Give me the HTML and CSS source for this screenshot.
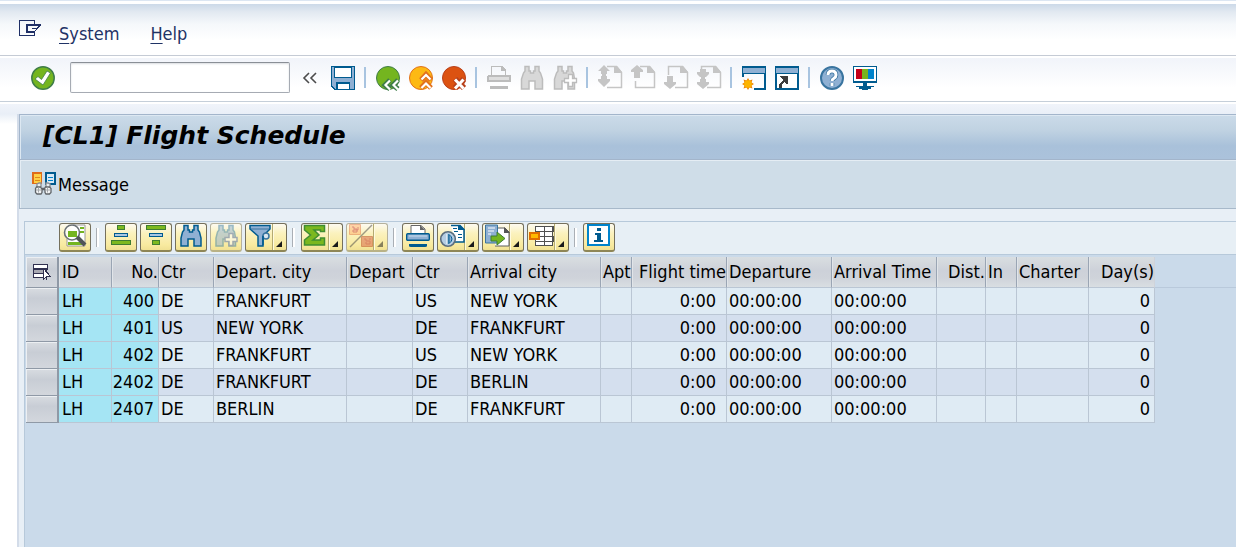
FILE: index.html
```html
<!DOCTYPE html>
<html lang="en">
<head>
<meta charset="utf-8">
<title>[CL1] Flight Schedule</title>
<link rel="stylesheet" href="styles.css">
</head>
<body>
<nav class="menubar" aria-label="Menu">
  <button class="icon-btn menu-icon" aria-label="Window menu"><svg width="24" height="18" viewBox="0 0 24 18" fill="none" stroke="#1f2f66" shape-rendering="crispEdges"><path d="M16.500 4V.5H1.500v15h15V12"/><path d="M8 5h15M9 4v8h7" stroke-width="2"/><path d="M22.500 5l-3 3h-6M20 8l-4 4" /></svg></button>
  <button class="menu-item"><u>S</u><span>ystem</span></button>
  <button class="menu-item"><u>H</u><span>elp</span></button>
</nav>

<div class="command-bar" role="toolbar" aria-label="System toolbar">
  <button class="icon-btn enter" aria-label="Enter"><svg width="24" height="24" viewBox="0 0 24 24"><circle cx="12" cy="12" r="11.200" fill="#74b51f" stroke="#3f7d49" stroke-width="1.500"/><path d="M4 13l3-2.500 3.500 3L16 5l3.500 2L12 19z" fill="#fff" stroke="#3f7d49" stroke-width=".8"/></svg></button>
  <input class="command" type="text" aria-label="Command">
  <button class="icon-btn collapse" aria-label="Hide command field"><svg width="16" height="12" viewBox="0 0 16 12" fill="none" stroke="#4c4c4c" stroke-width="1.600"><path d="M6 1L1 6l5 5M13 1L8 6l5 5"/></svg></button>
  <button class="icon-btn" aria-label="Save"><svg width="24" height="24" viewBox="0 0 24 24" shape-rendering="crispEdges"><path d="M0 0h24v24H3l-3-3z" fill="#005b8f"/><path d="M1 1h22v22H4l-3-3z" fill="#8fb0d3"/><path d="M3 1h18v11H3z" fill="#005b8f"/><path d="M4 2h16v9H4z" fill="#fff"/><path d="M5 16h14v8H5z" fill="#005b8f"/><path d="M7 18h11v5H7z" fill="#fff"/></svg></button>
  <span class="sep"></span>
  <button class="icon-btn" aria-label="Back"><svg width="24" height="24" viewBox="0 0 24 24" fill="none"><circle cx="12" cy="12" r="11.500" fill="#74b51f" stroke="#3f7d49"/><path d="M14 14l-5 5 5 4M22 14l-5 5 5 4" stroke="#3f7d49" stroke-width="5"/><path d="M14 14.500L9.500 19l4.500 4.500M22 14.500L17.500 19l4.500 4.500" stroke="#fff" stroke-width="2.200"/></svg></button>
  <button class="icon-btn" aria-label="Exit"><svg width="24" height="24" viewBox="0 0 24 24" fill="none"><circle cx="12" cy="12" r="11.500" fill="#fdb913" stroke="#e2711d"/><path d="M12 14l5-5.500 5 5.500M12 22l5-5.500 5 5.500" stroke="#e2711d" stroke-width="5"/><path d="M12.500 13.500L17 9l4.500 4.500M12.500 22l4.500-4.500 4.500 4.500" stroke="#fff" stroke-width="2.200"/></svg></button>
  <button class="icon-btn" aria-label="Cancel"><svg width="24" height="24" viewBox="0 0 24 24" fill="none"><circle cx="12" cy="12" r="11.500" fill="#dc5211" stroke="#b8401b"/><path d="M13 13l9 9M22 13l-9 9" stroke="#b8401b" stroke-width="6"/><path d="M13 13.500l8.500 9M21.500 13.500l-8.500 9" stroke="#fff" stroke-width="3"/></svg></button>
  <span class="sep"></span>
  <button class="icon-btn" aria-label="Print" disabled><svg width="24" height="24" viewBox="0 0 24 24" shape-rendering="crispEdges"><path d="M4 9V0h11l4 4v5h-1V5h-4V1H5v8zM0 11q0-2 2-2h20q2 0 2 2v5H0z" fill="#bcbcbc"/><path d="M2 11h20v3H2z" fill="#dedede"/><path d="M3 20h18v2q0 1-2 1H5q-2 0-2-1z" fill="#bcbcbc"/></svg></button>
  <button class="icon-btn" aria-label="Find" disabled><svg width="24" height="24" viewBox="0 0 24 24"><path d="M5 .5h4V5h1.500v2h3V5H15V.500h4V5l1.500 2 2 6v10H15v-8H9v8H1.500V13l2-6L5 5z" fill="#d8d8d8" stroke="#bcbcbc" stroke-width="1.500"/></svg></button>
  <button class="icon-btn" aria-label="Find next" disabled><svg width="24" height="24" viewBox="0 0 24 24"><path d="M5 .5h4V5h1.500v2h3V5H15V.500h4V5l1.500 2 1 6v10H15v-8H9v8H1.500V13l2-6L5 5z" fill="#d8d8d8" stroke="#bcbcbc" stroke-width="1.500"/><path d="M15.500 8.500h4v4h4v4h-4v4h-4v-4h-4v-4h4z" fill="#fff" stroke="#bcbcbc" stroke-width="1.300"/></svg></button>
  <span class="sep"></span>
  <button class="icon-btn" aria-label="First page" disabled><svg width="24" height="24" viewBox="0 0 24 24"><path d="M9 .5h9.500l5 6v15H9" fill="none" stroke="#c5c5c5" stroke-width="1.500"/><path d="M16 0h3l5 6v1h-8zM6-1l6 6H9v3H3V5H0zM3 10h6v3h3v2l-6 6-6-6v-2h3zM4 8h4v2H4z" fill="#c5c5c5"/></svg></button>
  <button class="icon-btn" aria-label="Previous page" disabled><svg width="24" height="24" viewBox="0 0 24 24"><path d="M9 .5h9.500l5 6v15H4.500V15" fill="none" stroke="#c5c5c5" stroke-width="1.500"/><path d="M16 0h3l5 6v1h-8zM6-1l6 5v2H9v6H3V6H0V4z" fill="#c5c5c5"/></svg></button>
  <button class="icon-btn" aria-label="Next page" disabled><svg width="24" height="24" viewBox="0 0 24 24"><path d="M4.500 9V.5h14l5 6v15H11" fill="none" stroke="#c5c5c5" stroke-width="1.500"/><path d="M16 0h3l5 6v1h-8zM3 10h6v6h3v2l-6 5-6-5v-2h3z" fill="#c5c5c5"/></svg></button>
  <button class="icon-btn" aria-label="Last page" disabled><svg width="24" height="24" viewBox="0 0 24 24"><path d="M4.500 3V.5h14l5 6v15H10" fill="none" stroke="#c5c5c5" stroke-width="1.500"/><path d="M16 0h3l5 6v1h-8zM3 3h6v3h3v2l-3 3H3L0 8V6h3zM4 11h4v2H4zM3 13h6v3h3v2l-6 5-6-5v-2h3z" fill="#c5c5c5"/></svg></button>
  <span class="sep"></span>
  <button class="icon-btn" aria-label="New session"><svg width="24" height="24" viewBox="0 0 24 24"><path d="M0 0h24v24H12v-2h10V8H2v3H0z" fill="#005b8f"/><path d="M1 2h22v5H1z" fill="#8fb0d3"/><path d="M6 12l1.500 2.500 3-1-1 3L12 18l-2.500 1.500 1 3-3-1L6 24l-1.500-2.500-3 1 1-3L0 18l2.500-1.500-1-3 3 1z" fill="#ef8500"/><circle cx="6" cy="18" r="3.800" fill="#fdb400"/></svg></button>
  <button class="icon-btn" aria-label="Create shortcut"><svg width="24" height="24" viewBox="0 0 24 24" shape-rendering="crispEdges"><path d="M0 0h24v24H0z" fill="#005b8f"/><path d="M1 2h22v5H1z" fill="#8fb0d3"/><path d="M2 8h20v14H2z" fill="#fff"/><path d="M5 10h8v8h-2l-2-2-2 3v3H4v-4l4-4z" fill="#3c3c3c"/></svg></button>
  <span class="sep"></span>
  <button class="icon-btn" aria-label="Help"><svg width="24" height="24" viewBox="0 0 24 24"><circle cx="12" cy="12" r="11" fill="#8fb0d3" stroke="#39749f" stroke-width="2"/><path d="M8 9q0-4 4-4t4 4q0 2-2 3.200T12 15M12 17v3" fill="none" stroke="#39749f" stroke-width="4.500"/><path d="M8 9q0-4 4-4t4 4q0 2-2 3.200T12 15M12 17v3" fill="none" stroke="#fff" stroke-width="3"/></svg></button>
  <button class="icon-btn" aria-label="Customize layout"><svg width="24" height="24" viewBox="0 0 24 24" shape-rendering="crispEdges"><path d="M0 0h24v17H14v3h7v1h-3v2h-3v1H9v-1H6v-2H3v-1h7v-3H0z" fill="#005b8f"/><path d="M1 1h22v14H1z" fill="#fff"/><path d="M3 3h6v10H3z" fill="#c4001a"/><path d="M9 3h6v10H9z" fill="#78b41e"/><path d="M15 3h6v10h-6z" fill="#0084cc"/></svg></button>
</div>

<main class="workspace">
  <div class="shell">
    <header class="title-bar"><h1>[CL1] Flight Schedule</h1></header>
    <div class="app-bar">
      <button class="message"><svg width="24" height="24" viewBox="0 0 24 24" shape-rendering="crispEdges"><path d="M0 0h10v12H0z" fill="#df6c1a"/><path d="M2 2h7v9H2z" fill="#ffd044"/><path d="M3 5h5v1H3zM3 8h5v1H3z" fill="#df8a1a"/><path d="M13 0h11v13H13z" fill="#005b8f"/><path d="M15 2h7v9h-7z" fill="#d8e9f5"/><path d="M16 5h5v1h-5zM16 8h5v1h-5z" fill="#0084cc"/><g shape-rendering="auto"><path d="M5 15v-3l2-1h2v4M18 15v-3l-2-1h-2v4" fill="#e9edf0" stroke="#8a8e92" stroke-width="1.300"/><path d="M3.500 16.500l1-1.500h4l1 1.500h3l1-1.500h4l1.500 1.500v4l-1.500 1.500h-3.500l-1-1.500v-3h-3v3l-1 1.500h-4l-1.500-1.500z" fill="#f2f4f5" stroke="#606468" stroke-width="1.300"/><path d="M6.500 15.500v5M4 18h5M15.500 15.500v5M13 18h5" stroke="#a4a8ac"/></g></svg><span>Message</span></button>
    </div>
    <section class="grid-panel">
      <div class="grid-tools" role="toolbar" aria-label="List toolbar">
        <button class="tool" aria-label="Details"><svg width="24" height="24" viewBox="0 0 24 24"><path d="M10 1h12v21H4v-7" fill="#fff" stroke="#999"/><path d="M17 3h4v2h-4zM17 7h4v2h-4zM5 18h14v3H5z" fill="#74b51f"/><circle cx="9" cy="8.500" r="7.500" fill="#fff" fill-opacity=".8" stroke="#6a7176" stroke-width="1.600"/><path d="M5 7h9v6H5z" fill="#74b51f"/><path d="M14 13l8 8" stroke="#505558" stroke-width="4"/></svg></button>
        <span class="tool-sep"></span>
        <button class="tool" aria-label="Sort ascending"><svg width="24" height="24" viewBox="0 0 24 24" shape-rendering="crispEdges" stroke-width="1"><path d="M8.500 1.500h7v4h-7zM2.500 16.500h19v4h-19z" fill="#7db91f" stroke="#3f7d32"/><path d="M5.500 9.500h13v3h-13z" fill="#a9c6e2" stroke="#005b8f"/></svg></button>
        <button class="tool" aria-label="Sort descending"><svg width="24" height="24" viewBox="0 0 24 24" shape-rendering="crispEdges"><path d="M2.500 1.500h19v4h-19zM8.500 16.500h7v4h-7z" fill="#7db91f" stroke="#3f7d32"/><path d="M5.500 9.500h13v3h-13z" fill="#a9c6e2" stroke="#005b8f"/></svg></button>
        <button class="tool" aria-label="Find"><svg width="24" height="24" viewBox="0 0 24 24"><path d="M5 1.500h4V6h1.500v2h3V6H15V1.500h4V6l1.500 2 1.500 6v8h-7v-7H9v7H2v-8l1.500-6L5 6z" fill="#8fb0d3" stroke="#005b8f" stroke-width="1.500"/></svg></button>
        <button class="tool off" aria-label="Find next" disabled><svg width="24" height="24" viewBox="0 0 24 24"><path d="M5 1.500h4V6h1.500v2h3V6H15V1.500h4V6l1.500 2 1 6v8H15v-7H9v7H2v-8l1.500-6L5 6z" fill="#8fb0d3" stroke="#347ba5" stroke-width="1.500"/><path d="M15 9.500h4v4h4v4h-4v4h-4v-4h-4v-4h4z" fill="#fff" stroke="#4868af" stroke-width="1.500"/></svg></button>
        <button class="tool split" aria-label="Set filter"><svg width="24" height="24" viewBox="0 0 24 24"><path d="M1 1.500h20V5l-7 7v10H9V12L1 5z" fill="#8fb0d3" stroke="#005b8f" stroke-width="1.500"/><path d="M2 5h18" stroke="#39749f"/><circle cx="17" cy="12" r="3" fill="#d9e6ee" stroke="#39749f" stroke-width="1.500"/><path d="M14 12v9" stroke="#005b8f" stroke-width="1.500"/></svg></button>
        <span class="tool-sep"></span>
        <button class="tool split" aria-label="Total"><svg width="24" height="24" viewBox="0 0 24 24"><path d="M-.5 1.500h20v6h-4V6H9l5 5-6 5h7.500v-2h4v7h-20v-5l6-5-6-5z" fill="#7bb81f" stroke="#3f8d32" stroke-width="1.500"/></svg></button>
        <button class="tool split off" aria-label="Subtotals" disabled><svg width="24" height="24" viewBox="0 0 24 24"><path d="M-.5.5h11v10h-11z" fill="#ffb066" stroke="#e0713c"/><path d="M11.500 12.500h11v10h-11z" fill="#d66245" stroke="#b8401b"/><path d="M2 3h2v2h3v3H3V6h5V3M14 15h2v2h4v3h-4v-2M19 15h2" stroke="#b22" fill="none"/><path d="M22 1L0 23" stroke="#444" stroke-width="1.500"/></svg></button>
        <span class="tool-sep"></span>
        <button class="tool" aria-label="Print"><svg width="24" height="24" viewBox="0 0 24 24"><path d="M5 9V1.500h10L19 5v4" fill="#fff" stroke="#666"/><path d="M14 1v5h5z" fill="#666"/><rect x=".7" y="9.700" width="22.600" height="6.600" rx="1" fill="#8fb0d3" stroke="#005b8f" stroke-width="1.400"/><path d="M3 12h18" stroke="#c9dced"/><path d="M3 20h18v2q0 1-2 1H5q-2 0-2-1z" fill="#005b8f"/></svg></button>
        <button class="tool split" aria-label="Views"><svg width="24" height="24" viewBox="0 0 24 24"><path d="M10 1.500h9l4 4V18H14" fill="#fff" stroke="#005b8f" stroke-width="1.500"/><path d="M17 1h2l5 5h-7zM12 4h4v1h-4zM13 7h4v1h-4zM17 10h4v1h-4zM17 13h4v1h-4z" fill="#005b8f"/><circle cx="7" cy="15" r="7.300" fill="#b5cde3" stroke="#5b6d7d" stroke-width="1.600"/><path d="M7 10v10M8 10.500q6 4.500 0 9z" stroke="#005b8f" fill="#8fb0d3"/><path d="M6 10v10" stroke="#fff"/></svg></button>
        <button class="tool split" aria-label="Export"><svg width="24" height="24" viewBox="0 0 24 24"><path d="M12 4h7l4 4v14H9" fill="#fff" stroke="#5d5d5d"/><path d="M18 3v6h6z" fill="#555"/><path d="M-.5 1h12v18h-12z" fill="#8fb0d3" stroke="#39749f"/><path d="M2 4h7M2 7h6M2 10h3" stroke="#fff"/><path d="M5 12h6V8l8 6.500-8 6.500v-4H5z" fill="#74b51f" stroke="#3f7d32"/></svg></button>
        <button class="tool split" aria-label="Choose layout"><svg width="24" height="24" viewBox="0 0 24 24" shape-rendering="crispEdges"><path d="M4 2h18v20H4z" fill="#fff"/><path d="M4 2.500h18v5H4M4 12.500h18v5H4M4 21.500h18M4.500 2v6M4.500 15v7M13.500 2v20M21.500 2v20" fill="none" stroke="#505050" stroke-width="1"/><path d="M-1 9h9v6h-9z" fill="#ffb900" stroke="#e06d00" stroke-width="2"/></svg></button>
        <span class="tool-sep"></span>
        <button class="tool" aria-label="Information"><svg width="24" height="24" viewBox="0 0 24 24" shape-rendering="crispEdges"><path d="M1 1h21v20H1z" fill="#fff" stroke="#0084cc" stroke-width="2"/><path d="M10 4h4v3h-4zM8 9h6v7h2v2H7v-2h3v-5H8z" fill="#005b8f"/></svg></button>
      </div>
      <div class="grid-area">
        <table class="grid">
          <colgroup><col class="c-sel"><col class="c-id"><col class="c-no"><col class="c-ctr"><col class="c-city"><col class="c-dep"><col class="c-ctr"><col class="c-city"><col class="c-slim"><col class="c-dur"><col class="c-time"><col class="c-time"><col class="c-dist"><col class="c-slim"><col class="c-charter"><col class="c-day"></colgroup>
          <thead>
            <tr><th class="sel"><button class="icon-btn select-all" aria-label="Select all"><svg width="18" height="16" viewBox="0 0 18 16" shape-rendering="crispEdges"><path d="M0 0h15v6h-1v2h-3V6H1v3h9v1H1v3h9v1H0z" fill="#30304f"/><path d="M1 1h13v3H1zM1 10h9v3H1z" fill="#fff"/><path d="M1 6h9v3H1z" fill="#a9a9b2"/><path d="M10.500 4.500v11l2-2h1v2-3h4z" fill="#fff" stroke="#30304f"/></svg></button></th><th>ID</th><th class="num">No.</th><th>Ctr</th><th>Depart. city</th><th>Depart</th><th>Ctr</th><th>Arrival city</th><th>Apt</th><th class="num">Flight time</th><th>Departure</th><th>Arrival Time</th><th class="num">Dist.</th><th>In</th><th>Charter</th><th class="num">Day(s)</th></tr>
          </thead>
          <tbody>
            <tr><td class="sel"></td><td class="key">LH</td><td class="key num">400</td><td>DE</td><td>FRANKFURT</td><td></td><td>US</td><td>NEW YORK</td><td></td><td class="num dur">0:00</td><td>00:00:00</td><td>00:00:00</td><td></td><td></td><td></td><td class="num">0</td></tr>
            <tr><td class="sel"></td><td class="key">LH</td><td class="key num">401</td><td>US</td><td>NEW YORK</td><td></td><td>DE</td><td>FRANKFURT</td><td></td><td class="num dur">0:00</td><td>00:00:00</td><td>00:00:00</td><td></td><td></td><td></td><td class="num">0</td></tr>
            <tr><td class="sel"></td><td class="key">LH</td><td class="key num">402</td><td>DE</td><td>FRANKFURT</td><td></td><td>US</td><td>NEW YORK</td><td></td><td class="num dur">0:00</td><td>00:00:00</td><td>00:00:00</td><td></td><td></td><td></td><td class="num">0</td></tr>
            <tr><td class="sel"></td><td class="key">LH</td><td class="key num">2402</td><td>DE</td><td>FRANKFURT</td><td></td><td>DE</td><td>BERLIN</td><td></td><td class="num dur">0:00</td><td>00:00:00</td><td>00:00:00</td><td></td><td></td><td></td><td class="num">0</td></tr>
            <tr><td class="sel"></td><td class="key">LH</td><td class="key num">2407</td><td>DE</td><td>BERLIN</td><td></td><td>DE</td><td>FRANKFURT</td><td></td><td class="num dur">0:00</td><td>00:00:00</td><td>00:00:00</td><td></td><td></td><td></td><td class="num">0</td></tr>
          </tbody>
        </table>
      </div>
    </section>
  </div>
</main>
</body>
</html>
```
FILE: styles.css
```css
* { box-sizing: border-box; }

body {
  margin: 0;
  min-height: 100vh;
  display: flex;
  flex-direction: column;
  background: #fff;
  color: #000;
  font: 18px/22px "DejaVu Sans Condensed", "Noto Sans", sans-serif;
}

button {
  font: inherit;
  color: inherit;
  background: none;
  border: 0;
  padding: 0;
}

svg { display: block; overflow: visible; }

.icon-btn { display: flex; flex: none; align-items: center; justify-content: center; }

/* Menu bar */
.menubar {
  display: flex;
  height: 56px;
  padding: 20px 18px 0;
  border-bottom: 1px solid #c5cbd5;
  background: linear-gradient(#dce6f2 0 1px, #fff 1px 4px, #ccd9e8 4px, #e2e9f1 12px, #f5f8fb 24px, #fff 40px);
  color: #1f3366;
}
.menu-icon { align-self: flex-start; margin-right: 17px; }
.menu-item { height: 28px; margin-right: 31px; text-underline-offset: 3px; display: flex; align-items: center; }

/* Command bar */
.command-bar {
  display: flex;
  align-items: center;
  gap: 9px;
  height: 46px;
  padding: 0 31px 2px;
  border-bottom: 1px solid #c5cfd9;
  background: linear-gradient(#fff 0 2px, #f1f4fa 2px, #fff 32px);
}
.command {
  width: 220px;
  height: 31px;
  margin-left: 6px;
  border: 1px solid #a6abb3;
  border-top-color: #8a8f96;
  border-radius: 2px;
  background: #fff;
  box-shadow: inset 0 1px 2px #d9dce0;
  font: inherit;
}
.collapse { width: 23px; }
.sep { width: 3px; height: 21px; border-left: 2px solid #a8c4e0; }

/* Work area */
.workspace {
  flex: 1;
  display: flex;
  padding: 12px 0 0 17px;
  background: linear-gradient(#fff 0 2px, #f0f4fa 2px, #e9eff7 12px, #fff 22px);
}
.shell {
  flex: 1;
  min-width: 0;
  display: flex;
  flex-direction: column;
  border-left: 2px solid #d3dce9;
  background: #e8eff6;
}
.title-bar {
  height: 46px;
  padding: 0 23px;
  border: 1px solid #a3b5cb;
  border-right: 0;
  background: linear-gradient(#cbdbe9, #c0d2e2 35%, #a9c1da 70%, #abc2db);
  box-shadow: inset 1px 1px #dde8f2;
}
h1 {
  margin: 0;
  font: italic 700 25px/42px "DejaVu Sans", sans-serif;
}
.app-bar {
  display: flex;
  align-items: center;
  height: 49px;
  padding: 0 12px;
  border-left: 1px solid #a8b9ca;
  border-bottom: 1px solid #a8b9ca;
  background: #cfdde8;
  box-shadow: inset 1px 1px #e5edf4;
}
.message { display: flex; align-items: center; gap: 2px; }
.message span { line-height: 24px; padding-top: 1px; }

/* List panel */
.grid-panel {
  flex: 1;
  display: flex;
  flex-direction: column;
  margin: 12px 0 0 5px;
  border-top: 1px solid #b7c9da;
  border-left: 1px solid #b7c9da;
}
.grid-tools {
  display: flex;
  align-items: center;
  gap: 3px;
  height: 33px;
  padding: 0 34px 2px;
  border-bottom: 1px solid #b7c9da;
  background: #e7eff5;
}
.tool {
  position: relative;
  width: 32px;
  height: 29px;
  padding: 0 3px 2px;
  border: 1px solid #75705c;
  border-bottom-width: 2px;
  border-bottom-color: #8e8656;
  border-radius: 3px;
  background: linear-gradient(#fdfaf0, #fbf2be 35%, #f8eaa0 80%, #f0e193);
}
.split {
  width: 42px;
  background: linear-gradient(90deg, transparent 26px, #b4aa72 26px 27px, #fffbe0 27px 28px, transparent 28px),
    linear-gradient(#fdfaf0, #fbf2be 35%, #f8eaa0 80%, #f0e193);
}
.split::after {
  content: "";
  position: absolute;
  right: 4px;
  bottom: 3px;
  border: 3px solid #1a1a1a;
  border-top-color: transparent;
  border-left-color: transparent;
}
.off { border-color: #b5b19c #b5b19c #b9b286; }
.off svg, .off::after { opacity: .5; }
.tool-sep { width: 8px; height: 19px; padding-left: 2px; }
.tool-sep::before { content: ""; display: block; width: 2px; height: 19px; border-left: 1px solid #aaafb5; background: #fff; }

.grid-area {
  flex: 1;
  padding: 2px 0 0 1px;
  background: linear-gradient(#b9c9db, #b9c9db) 0 32px / 100% 1px no-repeat #cadaea;
}
.grid { width: 1129px; table-layout: fixed; border-spacing: 0; }
.c-sel { width: 33px; }
.c-id { width: 53px; }
.c-no { width: 47px; }
.c-ctr { width: 55px; }
.c-city { width: 133px; }
.c-dep { width: 66px; }
.c-slim { width: 31px; }
.c-dur { width: 95px; }
.c-time { width: 105px; }
.c-dist { width: 49px; }
.c-charter { width: 72px; }
.c-day { width: 66px; }

th, td {
  height: 27px;
  padding: 0 0 0 2px;
  border-right: 1px solid #bac6d4;
  border-bottom: 1px solid #bac6d4;
  text-align: left;
  font-weight: 400;
  line-height: 22px;
  white-space: nowrap;
}
th {
  height: 31px;
  border-right-color: #9aa5b4;
  background: linear-gradient(#d9dee1, #cdd1d9 45%, #cfd3da 70%, #d9dee2);
  box-shadow: inset 1px 0 #e1e5e9;
}
th:last-child { border-right-color: #cfd3da; }
td { background: #dfebf4; }
tr:nth-child(even) td { background: #d4dfee; }
.num { padding: 0; text-align: right; }
td.num { padding-right: 4px; }
td.dur { padding-right: 10px; }
tbody td.key, tbody tr:nth-child(even) td.key { background: #a5e5f4; }
.sel, tbody tr:nth-child(even) td.sel {
  padding: 0;
  border-right: 2px solid #8f99a6;
  border-bottom-color: #8f99a6;
  background: linear-gradient(#d8dce1, #c8cdd5 40%, #d3d7dd);
  box-shadow: inset 1px 1px #eceff2;
}
.sel + th, .sel + td { padding-left: 3px; }
.select-all { width: 31px; }
```
